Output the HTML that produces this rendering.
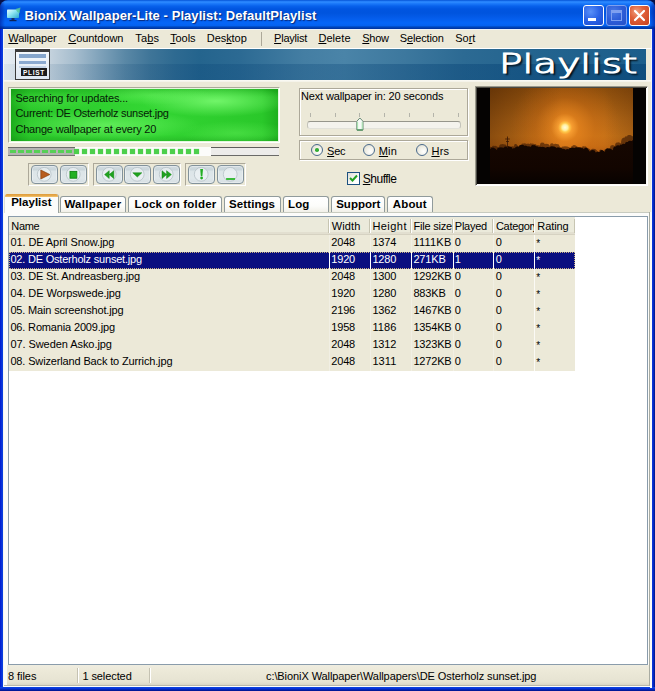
<!DOCTYPE html>
<html><head><meta charset="utf-8"><title>BioniX Wallpaper-Lite</title>
<style>
*{margin:0;padding:0;box-sizing:border-box}
html,body{width:655px;height:691px;overflow:hidden;background:#ece9d8}
body{position:relative;font-family:"Liberation Sans",sans-serif;font-size:11px;color:#000}
div,span,svg{position:absolute}
.tx{white-space:pre;line-height:1}
u{text-decoration:underline;text-decoration-thickness:1px;text-underline-offset:1px}
</style></head>
<body>
<div style="left:0;top:0;width:655px;height:12px;background:#060f48"></div>
<div style="left:0;top:0;width:655px;height:29px;background:linear-gradient(to bottom,#0450cf 0,#1a74f4 1px,#2f8cff 2px,#1c7afa 3.5px,#0862ec 6px,#0055e0 9px,#0054de 13px,#045cea 18px,#0666f8 23px,#0562f0 25.5px,#0048c0 27px,#00309a 29px);border-radius:8px 8px 0 0"></div>
<div style="left:0;top:0;width:655px;height:29px;border-radius:8px 8px 0 0;background:linear-gradient(to right,rgba(0,20,140,.55) 0,rgba(0,20,140,0) 5px,rgba(0,20,140,0) 650px,rgba(0,20,140,.55) 655px)"></div>
<div style="left:0;top:29px;width:3px;height:662px;background:linear-gradient(to right,#0019cf,#0831d9 50%,#0a44e0)"></div>
<div style="left:3px;top:29px;width:1px;height:658px;background:#f6f6f2"></div>
<div style="left:651px;top:29px;width:1px;height:658px;background:#f6f6f2"></div>
<div style="left:4px;top:29px;width:647px;height:1px;background:#eef2f8"></div>
<div style="left:652px;top:29px;width:3px;height:662px;background:linear-gradient(to right,#0c3ce0,#0628c8 45%,#001ea0 75%,#00138c)"></div>
<div style="left:0;top:687px;width:655px;height:4px;background:linear-gradient(to bottom,#0a48e0,#0831d9 40%,#001ea0 80%,#00138c)"></div>
<svg style="left:5px;top:6px" width="18" height="18" viewBox="0 0 18 18">
<defs><linearGradient id="mon" x1="0" y1="0" x2="1" y2="1"><stop offset="0" stop-color="#e8fcff"/><stop offset=".45" stop-color="#8ee6f2"/><stop offset="1" stop-color="#2aa8cc"/></linearGradient></defs>
<rect x="2" y="3.5" width="12" height="8.5" rx=".8" fill="url(#mon)"/>
<rect x="6.5" y="12" width="3" height="2" fill="#16306a"/>
<rect x="4.5" y="14" width="7" height="1.2" fill="#0c2258"/>
<path d="M10.5 3 L15.5 1.5 L14.5 7.5 L12 5.5 Z" fill="#58c8a0" opacity=".85"/>
</svg>
<div class="tx" style="left:24.60px;top:9.10px;font-size:13px;letter-spacing:0.068px;color:#fff;font-weight:bold;text-shadow:1px 1px 1px #0a2878">BioniX Wallpaper-Lite - Playlist: DefaultPlaylist</div>
<div style="left:583px;top:5px;width:21px;height:21px;border:1px solid #fff;border-radius:3px;background:radial-gradient(circle at 35% 30%,#5a90f8 0,#2a62e6 50%,#1c4cd0 100%)"><div style="left:4px;top:12px;width:8px;height:3px;background:#fff"></div></div>
<div style="left:606px;top:5px;width:21px;height:21px;border:1px solid #7ea0ee;border-radius:3px;background:radial-gradient(circle at 35% 30%,#4a7ae6 0,#2c5cd8 50%,#2450c8 100%)"><div style="left:4px;top:4px;width:11px;height:11px;border:1px solid #7e9ff0;border-top-width:3px"></div></div>
<div style="left:629px;top:5px;width:21px;height:21px;border:1px solid #fff;border-radius:3px;background:radial-gradient(circle at 35% 30%,#f0a080 0,#e0603a 40%,#c8401c 100%)"><svg width="19" height="19" style="left:0;top:0"><path d="M5 5 L14 14 M14 5 L5 14" stroke="#fff" stroke-width="2.2" stroke-linecap="round"/></svg></div>
<div class="tx" style="left:8.30px;top:32.69px;font-size:11px;letter-spacing:-0.092px;color:#000;"><u>W</u>allpaper</div>
<div class="tx" style="left:68.30px;top:32.69px;font-size:11px;letter-spacing:-0.062px;color:#000;"><u>C</u>ountdown</div>
<div class="tx" style="left:135.30px;top:32.69px;font-size:11px;letter-spacing:0.112px;color:#000;">Ta<u>b</u>s</div>
<div class="tx" style="left:170.20px;top:32.69px;font-size:11px;letter-spacing:-0.098px;color:#000;"><u>T</u>ools</div>
<div class="tx" style="left:206.80px;top:32.69px;font-size:11px;letter-spacing:-0.066px;color:#000;">Des<u>k</u>top</div>
<div class="tx" style="left:274.10px;top:32.69px;font-size:11px;letter-spacing:-0.230px;color:#000;"><u>P</u>laylist</div>
<div class="tx" style="left:318.40px;top:32.69px;font-size:11px;letter-spacing:0.067px;color:#000;"><u>D</u>elete</div>
<div class="tx" style="left:362.30px;top:32.69px;font-size:11px;letter-spacing:-0.308px;color:#000;"><u>S</u>how</div>
<div class="tx" style="left:399.80px;top:32.69px;font-size:11px;letter-spacing:-0.152px;color:#000;">S<u>e</u>lection</div>
<div class="tx" style="left:455.30px;top:32.69px;font-size:11px;letter-spacing:-0.047px;color:#000;">So<u>r</u>t</div>
<div style="left:261px;top:32px;width:1px;height:14px;background:#aca899"></div>
<div style="left:4px;top:48px;width:647px;height:1px;background:#fff"></div>
<div style="left:4px;top:49px;width:642px;height:31px;background:linear-gradient(to right,#e6edf3 0,#d3dde6 30px,#c4d2dd 46px,#a6bdce 71px,#7fa2ba 96px,#5a88a6 121px,#3f7598 146px,#2e6a91 171px,#24648d 196px,#2c6a93 236px,#447ea3 300px,#4a84a8 340px,#3d789e 400px,#2c6a93 460px,#22638e 540px,#1c5e8b 642px)">
<div style="left:0;top:15px;width:642px;height:16px;background:linear-gradient(to right,rgba(120,150,175,.1) 0,rgba(40,90,130,.2) 100px,rgba(10,70,120,.3) 200px,rgba(10,70,120,.3) 320px,rgba(10,70,120,.45) 450px,rgba(5,65,115,.55) 642px)"></div>
</div>
<div style="left:646px;top:49px;width:5px;height:31px;background:#ece9d8"></div>
<div style="left:4px;top:80px;width:647px;height:2px;background:linear-gradient(to bottom,#fbfbf7,#f3f1e6)"></div>
<div style="left:15px;top:49px;width:35px;height:31px;background:#3a3a3a">
<div style="left:1px;top:3px;width:33px;height:27px;background:linear-gradient(to bottom,#f4f8fc,#dfe8f2)"></div>
<div style="left:4px;top:5px;width:27px;height:4px;background:#86a6cc"></div>
<div style="left:4px;top:12px;width:27px;height:3px;background:#8caad0"></div>
<div style="left:4px;top:17px;width:27px;height:2px;background:#c5d5e8"></div>
<div style="left:6px;top:19px;width:26px;height:8px;background:#1c1c1c"></div>
</div>
<div class="tx" style="left:22.90px;top:69.70px;font-size:6.5px;letter-spacing:0.716px;color:#fff;font-weight:bold;">PLIST</div>
<div style="left:490px;top:49px;width:156px;height:30px;overflow:hidden"><div class="tx" id="logo" style="left:8.9px;top:1.2px;font-family:'DejaVu Sans',sans-serif;font-weight:200;font-size:27px;color:#fff;-webkit-text-stroke:1.1px #fff;transform-origin:0 0;transform:scaleX(1.442);text-shadow:1.5px 2px 1.5px #000">Playlist</div></div>
<div style="left:8px;top:87px;width:272px;height:56px;border:1px solid;border-color:#aca899 #fff #fff #aca899"></div>
<div style="left:9px;top:88px;width:270px;height:54px;border:1px solid #e4f8dc;border-left-width:2px;overflow:hidden;background:#2ccc2c">
<div style="left:0;top:0;width:270px;height:54px;background:
radial-gradient(ellipse 75px 16px at 205px 12px,rgba(130,255,120,.8),rgba(130,255,120,0) 100%),
radial-gradient(ellipse 95px 15px at 95px 36px,rgba(120,250,110,.65),rgba(120,250,110,0) 100%),
radial-gradient(ellipse 60px 10px at 140px 6px,rgba(110,245,100,.5),rgba(110,245,100,0) 100%),
radial-gradient(ellipse 55px 12px at 225px 44px,rgba(100,240,90,.45),rgba(100,240,90,0) 100%),
radial-gradient(ellipse 50px 10px at 40px 12px,rgba(90,235,80,.35),rgba(90,235,80,0) 100%),
linear-gradient(to bottom,rgba(0,90,0,.18) 0,rgba(0,90,0,0) 8px,rgba(0,90,0,0) 46px,rgba(0,90,0,.22) 54px),
linear-gradient(to right,#1cac1c 0,#2ac82a 7%,#33d633 50%,#2ac82a 93%,#1cac1c 100%)"></div>
</div>
<div class="tx" style="left:15.40px;top:92.69px;font-size:11px;letter-spacing:-0.179px;color:#062006;">Searching for updates...</div>
<div class="tx" style="left:15.40px;top:108.19px;font-size:11px;letter-spacing:-0.256px;color:#062006;">Current: DE Osterholz sunset.jpg</div>
<div class="tx" style="left:15.40px;top:123.69px;font-size:11px;letter-spacing:-0.191px;color:#062006;">Change wallpaper at every 20</div>
<div style="left:8px;top:147px;width:271px;height:9px;background:#fcfcfa"><div style="left:203px;top:0;width:68px;height:9px;background:#edecea;border-top:1px solid #5e5e5c;border-bottom:1px solid #6a6a68"></div><div style="left:0;top:0;width:67px;height:9px;background:#b4b4b2;border-top:1px solid #6c6c6a;border-bottom:1px solid #767674"></div><div style="left:2px;top:3px;width:6px;height:3px;background:#56cf56"></div><div style="left:10px;top:3px;width:6px;height:3px;background:#56cf56"></div><div style="left:18px;top:3px;width:6px;height:3px;background:#56cf56"></div><div style="left:26px;top:3px;width:6px;height:3px;background:#56cf56"></div><div style="left:34px;top:3px;width:6px;height:3px;background:#56cf56"></div><div style="left:42px;top:3px;width:6px;height:3px;background:#56cf56"></div><div style="left:50px;top:3px;width:6px;height:3px;background:#56cf56"></div><div style="left:58px;top:3px;width:6px;height:3px;background:#56cf56"></div><div style="left:66px;top:2px;width:5px;height:5px;background:#4ccf4c;box-shadow:0 0 1px #7fe07f"></div><div style="left:74px;top:2px;width:5px;height:5px;background:#4ccf4c;box-shadow:0 0 1px #7fe07f"></div><div style="left:82px;top:2px;width:5px;height:5px;background:#4ccf4c;box-shadow:0 0 1px #7fe07f"></div><div style="left:90px;top:2px;width:5px;height:5px;background:#4ccf4c;box-shadow:0 0 1px #7fe07f"></div><div style="left:98px;top:2px;width:5px;height:5px;background:#4ccf4c;box-shadow:0 0 1px #7fe07f"></div><div style="left:106px;top:2px;width:5px;height:5px;background:#4ccf4c;box-shadow:0 0 1px #7fe07f"></div><div style="left:114px;top:2px;width:5px;height:5px;background:#4ccf4c;box-shadow:0 0 1px #7fe07f"></div><div style="left:122px;top:2px;width:5px;height:5px;background:#4ccf4c;box-shadow:0 0 1px #7fe07f"></div><div style="left:130px;top:2px;width:5px;height:5px;background:#4ccf4c;box-shadow:0 0 1px #7fe07f"></div><div style="left:138px;top:2px;width:5px;height:5px;background:#4ccf4c;box-shadow:0 0 1px #7fe07f"></div><div style="left:146px;top:2px;width:5px;height:5px;background:#4ccf4c;box-shadow:0 0 1px #7fe07f"></div><div style="left:154px;top:2px;width:5px;height:5px;background:#4ccf4c;box-shadow:0 0 1px #7fe07f"></div><div style="left:162px;top:2px;width:5px;height:5px;background:#4ccf4c;box-shadow:0 0 1px #7fe07f"></div><div style="left:170px;top:2px;width:5px;height:5px;background:#4ccf4c;box-shadow:0 0 1px #7fe07f"></div><div style="left:178px;top:2px;width:5px;height:5px;background:#4ccf4c;box-shadow:0 0 1px #7fe07f"></div><div style="left:186px;top:2px;width:5px;height:5px;background:#4ccf4c;box-shadow:0 0 1px #7fe07f"></div></div>
<div style="left:28px;top:163px;width:61px;height:23px;border:1px solid;border-color:#aca899 #fff #fff #aca899"></div>
<div style="left:93px;top:163px;width:88px;height:23px;border:1px solid;border-color:#aca899 #fff #fff #aca899"></div>
<div style="left:185px;top:163px;width:61px;height:23px;border:1px solid;border-color:#aca899 #fff #fff #aca899"></div>
<div style="left:31.2px;top:165px;width:27px;height:19px;border:1px solid #82929b;border-radius:4px;background:linear-gradient(to bottom,#d2dce0 0,#c9d5da 4px,#dce5e8 5px,#dfe7ea 12px,#d6dfe3 17px);box-shadow:inset 0 0 0 1px rgba(255,255,255,.35)"><svg width="27" height="19" viewBox="0 0 27 19" style="left:-1px;top:-1px"><circle cx="13.2" cy="9.3" r="6.9" fill="rgba(236,242,244,.75)" stroke="#b0bcc2" stroke-width=".7"/><path d="M9.8 5 L9.8 14 L18.8 9.5 Z" fill="#b85c1e" stroke="#8a400e" stroke-width=".7" stroke-linejoin="round"/></svg></div>
<div style="left:60.2px;top:165px;width:27px;height:19px;border:1px solid #82929b;border-radius:4px;background:linear-gradient(to bottom,#d2dce0 0,#c9d5da 4px,#dce5e8 5px,#dfe7ea 12px,#d6dfe3 17px);box-shadow:inset 0 0 0 1px rgba(255,255,255,.35)"><svg width="27" height="19" viewBox="0 0 27 19" style="left:-1px;top:-1px"><circle cx="13.2" cy="9.3" r="6.9" fill="rgba(236,242,244,.75)" stroke="#b0bcc2" stroke-width=".7"/><rect x="10" y="6.4" width="6.8" height="6.8" fill="#22b022" stroke="#0f860f" stroke-width=".9"/></svg></div>
<div style="left:96.2px;top:165px;width:27px;height:19px;border:1px solid #82929b;border-radius:4px;background:linear-gradient(to bottom,#d2dce0 0,#c9d5da 4px,#dce5e8 5px,#dfe7ea 12px,#d6dfe3 17px);box-shadow:inset 0 0 0 1px rgba(255,255,255,.35)"><svg width="27" height="19" viewBox="0 0 27 19" style="left:-1px;top:-1px"><circle cx="13.2" cy="9.3" r="6.9" fill="rgba(236,242,244,.75)" stroke="#b0bcc2" stroke-width=".7"/><path d="M13.2 5.7 L13.2 13.5 L8.6 9.6 Z M17.8 5.7 L17.8 13.5 L13.2 9.6 Z" fill="#1fa31f" stroke="#0e800e" stroke-width=".5" stroke-linejoin="round"/></svg></div>
<div style="left:124.4px;top:165px;width:27px;height:19px;border:1px solid #82929b;border-radius:4px;background:linear-gradient(to bottom,#d2dce0 0,#c9d5da 4px,#dce5e8 5px,#dfe7ea 12px,#d6dfe3 17px);box-shadow:inset 0 0 0 1px rgba(255,255,255,.35)"><svg width="27" height="19" viewBox="0 0 27 19" style="left:-1px;top:-1px"><circle cx="13.2" cy="9.3" r="6.9" fill="rgba(236,242,244,.75)" stroke="#b0bcc2" stroke-width=".7"/><path d="M8.8 7.8 L17.8 7.8 L13.3 12 Z" fill="#1fa31f" stroke="#0e800e" stroke-width=".5" stroke-linejoin="round"/></svg></div>
<div style="left:152.5px;top:165px;width:27px;height:19px;border:1px solid #82929b;border-radius:4px;background:linear-gradient(to bottom,#d2dce0 0,#c9d5da 4px,#dce5e8 5px,#dfe7ea 12px,#d6dfe3 17px);box-shadow:inset 0 0 0 1px rgba(255,255,255,.35)"><svg width="27" height="19" viewBox="0 0 27 19" style="left:-1px;top:-1px"><circle cx="13.2" cy="9.3" r="6.9" fill="rgba(236,242,244,.75)" stroke="#b0bcc2" stroke-width=".7"/><path d="M9 5.7 L9 13.5 L13.6 9.6 Z M13.6 5.7 L13.6 13.5 L18.4 9.6 Z" fill="#1fa31f" stroke="#0e800e" stroke-width=".5" stroke-linejoin="round"/></svg></div>
<div style="left:188.1px;top:165px;width:27px;height:19px;border:1px solid #82929b;border-radius:4px;background:linear-gradient(to bottom,#d2dce0 0,#c9d5da 4px,#dce5e8 5px,#dfe7ea 12px,#d6dfe3 17px);box-shadow:inset 0 0 0 1px rgba(255,255,255,.35)"><svg width="27" height="19" viewBox="0 0 27 19" style="left:-1px;top:-1px"><circle cx="13.2" cy="9.3" r="6.9" fill="rgba(236,242,244,.75)" stroke="#b0bcc2" stroke-width=".7"/><path d="M12.2 4 L15 4 L14.4 11 L12.8 11 Z" fill="#22ae22"/><circle cx="13.6" cy="13" r="1.4" fill="#22ae22"/></svg></div>
<div style="left:216.9px;top:165px;width:27px;height:19px;border:1px solid #82929b;border-radius:4px;background:linear-gradient(to bottom,#d2dce0 0,#c9d5da 4px,#dce5e8 5px,#dfe7ea 12px,#d6dfe3 17px);box-shadow:inset 0 0 0 1px rgba(255,255,255,.35)"><svg width="27" height="19" viewBox="0 0 27 19" style="left:-1px;top:-1px"><circle cx="13.2" cy="9.3" r="6.9" fill="rgba(236,242,244,.75)" stroke="#b0bcc2" stroke-width=".7"/><rect x="9.1" y="13" width="8.9" height="2" fill="#3cbc3c"/></svg></div>
<div style="left:300px;top:89px;width:169px;height:48px;border:1px solid #fff"></div><div style="left:299px;top:88px;width:169px;height:48px;border:1px solid #aca899"></div>
<div class="tx" style="left:301.00px;top:91.49px;font-size:11px;letter-spacing:-0.153px;color:#000;">Next wallpaper in: 20 seconds</div>
<div style="left:310px;top:113px;width:1px;height:4px;background:#b4b4aa"></div>
<div style="left:335px;top:113px;width:1px;height:4px;background:#b4b4aa"></div>
<div style="left:359px;top:113px;width:1px;height:4px;background:#b4b4aa"></div>
<div style="left:384px;top:113px;width:1px;height:4px;background:#b4b4aa"></div>
<div style="left:409px;top:113px;width:1px;height:4px;background:#b4b4aa"></div>
<div style="left:433px;top:113px;width:1px;height:4px;background:#b4b4aa"></div>
<div style="left:458px;top:113px;width:1px;height:4px;background:#b4b4aa"></div>
<div style="left:307px;top:121px;width:154px;height:8px;border:1px solid;border-color:#96968c #c4c4ba #e2e2da #c4c4ba;border-radius:3px;background:#f4f3ed"></div>
<svg style="left:355.6px;top:117.4px" width="8" height="15" viewBox="0 0 8 15"><path d="M3.9 1 L7 4.3 L7 13 L0.8 13 L0.8 4.3 Z" fill="#f6fbf6" stroke="#6a8a76" stroke-width="1"/><path d="M1.6 5 L1.6 12.4 M6.2 5 L6.2 12.4" stroke="#a6e4ae" stroke-width="1"/><path d="M1 13 L6.8 13" stroke="#3f8a50" stroke-width="1.2"/></svg>
<div style="left:300px;top:141px;width:169px;height:20px;border:1px solid #fff"></div><div style="left:299px;top:140px;width:169px;height:20px;border:1px solid #aca899"></div>
<div style="left:311px;top:144px;width:12px;height:12px;border-radius:50%;border:1px solid #4a6a8c;background:radial-gradient(circle at 65% 65%,#fff 0,#f0efe6 50%,#d8d6c8 100%)"><div style="left:3.2px;top:3.2px;width:3.6px;height:3.6px;border-radius:50%;background:#35ad35"></div></div>
<div style="left:363px;top:144px;width:12px;height:12px;border-radius:50%;border:1px solid #4a6a8c;background:radial-gradient(circle at 65% 65%,#fff 0,#f0efe6 50%,#d8d6c8 100%)"></div>
<div style="left:416px;top:144px;width:12px;height:12px;border-radius:50%;border:1px solid #4a6a8c;background:radial-gradient(circle at 65% 65%,#fff 0,#f0efe6 50%,#d8d6c8 100%)"></div>
<div class="tx" style="left:327.10px;top:145.79px;font-size:11px;letter-spacing:-0.223px;color:#000;"><u>S</u>ec</div>
<div class="tx" style="left:378.80px;top:145.79px;font-size:11px;letter-spacing:0.122px;color:#000;"><u>M</u>in</div>
<div class="tx" style="left:431.40px;top:145.79px;font-size:11px;letter-spacing:0.297px;color:#000;"><u>H</u>rs</div>
<div style="left:347px;top:172px;width:13px;height:13px;border:1px solid #1c5180;background:linear-gradient(135deg,#dcdcd4,#fff 70%)"><svg width="11" height="11" style="left:0;top:0"><path d="M2 5 L4.5 7.5 L9 2.5" fill="none" stroke="#21a121" stroke-width="2"/></svg></div>
<div class="tx" style="left:362.80px;top:172.84px;font-size:12px;letter-spacing:-0.508px;color:#000;"><u>S</u>huffle</div>
<div style="left:475px;top:86px;width:173px;height:100px;border:1px solid;border-color:#9c9a8c #fff #fff #9c9a8c"></div>
<div style="left:476px;top:87px;width:171px;height:98px;background:#fbfaf4;border-top:1px solid #4a4a44;border-left:1px solid #4a4a44"></div>
<div style="left:477px;top:88px;width:169px;height:96px;background:#050302"></div>
<div style="left:490px;top:88px;width:143px;height:96px;overflow:hidden;background:#140802">
<div style="left:0;top:0;width:143px;height:70px;background:
radial-gradient(circle at 75px 39.5px,#fffbe0 0,#fff0a0 2.8px,#ffc84a 4.6px,rgba(250,160,50,.95) 7px,rgba(238,135,30,.65) 14px,rgba(225,115,20,.3) 30px,rgba(220,110,20,0) 55px),
linear-gradient(to bottom,#8a4c0c 0,#9c5810 14px,#b46816 32px,#c47218 48px,#c06a14 58px,#a85410 68px)"></div>
<div style="left:0;top:0;width:143px;height:70px;background:linear-gradient(to right,rgba(50,20,0,.4) 0,rgba(50,20,0,.12) 30%,rgba(50,20,0,0) 50%,rgba(50,20,0,0) 80%,rgba(50,20,0,.2) 100%)"></div>
<svg style="left:0;top:0" width="143" height="96" viewBox="0 0 143 96">
<defs><linearGradient id="gg" x1="0" y1="0" x2="0" y2="1"><stop offset="0" stop-color="#160701"/><stop offset=".62" stop-color="#120500"/><stop offset=".75" stop-color="#0e0400"/><stop offset="1" stop-color="#070200"/></linearGradient></defs>
<path d="M-2 59.1 Q-2 58.3 2 59.1 Q2 57.2 5 58.0 Q5 57.2 9 59.8 Q9 55.5 12 56.3 Q12 55.5 15 56.5 Q15 55.7 17 58.3 Q17 57.5 21 59.8 Q21 57.6 24 58.4 Q24 55.3 26 56.1 Q26 55.3 29 59.4 Q29 56.2 31 57.0 Q31 54.8 34 55.6 Q34 54.8 37 56.0 Q37 55.1 40 55.9 Q40 54.9 42 55.7 Q42 54.9 45 56.2 Q45 55.4 47 57.4 Q47 56.6 50 57.6 Q50 53.9 53 54.7 Q53 53.9 55 56.2 Q55 55.3 58 56.1 Q58 55.3 60 57.9 Q60 54.6 62 55.4 Q62 54.6 64 56.4 Q64 55.4 68 56.2 Q68 55.4 71 60.4 Q71 57.8 74 58.6 Q74 57.8 77 58.6 Q77 57.8 81 60.3 Q81 57.0 83 57.8 Q83 56.5 85 57.3 Q85 56.5 89 59.8 Q89 58.5 92 59.3 Q92 57.6 95 58.4 Q95 57.6 98 60.5 Q98 59.7 101 62.3 Q101 60.3 105 61.1 Q105 60.3 109 64.6 Q109 60.9 111 61.7 Q111 60.9 114 64.6 Q114 60.7 116 61.5 Q116 60.4 120 61.2 Q120 56.6 122 57.4 Q122 56.6 125 58.1 Q125 53.7 128 54.5 Q128 53.7 131 55.5 Q131 48.7 135 49.5 Q135 47.8 137 48.6 Q137 46.3 140 47.1 Q140 46.3 143 48.5 Q143 46.7 147 47.5 L148 97 L-2 97 Z" fill="#2a0f02" opacity=".55"/>
<path d="M-2 60.5 Q-2 59.7 1 60.7 Q1 58.9 3 59.7 Q3 58.9 5 60.6 Q5 59.8 7 62.2 Q7 58.8 10 59.6 Q10 58.8 14 59.8 Q14 58.0 17 58.8 Q17 57.9 21 58.7 Q21 57.9 23 61.3 Q23 59.4 25 60.2 Q25 57.8 29 58.6 Q29 56.3 32 57.1 Q32 56.3 35 57.9 Q35 57.1 38 58.6 Q38 57.8 41 58.7 Q41 56.5 44 57.3 Q44 56.5 47 58.6 Q47 57.8 49 59.2 Q49 58.2 52 59.0 Q52 58.2 56 59.8 Q56 58.5 60 59.3 Q60 57.8 64 58.6 Q64 57.8 67 59.9 Q67 58.9 70 59.7 Q70 58.9 73 61.1 Q73 60.3 76 61.7 Q76 60.5 79 61.3 Q79 59.1 81 59.9 Q81 59.1 85 60.0 Q85 58.7 88 59.5 Q88 58.7 92 60.3 Q92 59.5 94 61.3 Q94 59.2 97 60.0 Q97 59.2 100 63.8 Q100 61.4 104 62.2 Q104 61.4 106 64.8 Q106 63.3 110 64.1 Q110 61.4 112 62.2 Q112 61.4 115 63.9 Q115 59.6 119 60.4 Q119 59.6 123 62.2 Q123 57.8 126 58.6 Q126 56.6 130 57.4 Q130 55.9 132 56.7 Q132 55.1 135 55.9 Q135 53.3 138 54.1 Q138 52.3 142 53.1 Q142 51.3 146 52.1 L148 97 L-2 97 Z" fill="url(#gg)"/>
<path d="M17.5 48.5 L17.5 60 M15.2 51 L19.8 51 M16 53.5 L19 53.5" stroke="#3a1804" stroke-width=".8" fill="none"/>
</svg>
</div>
<div style="left:4px;top:212px;width:648px;height:453px;background:#fcfcfa"></div>
<div style="left:4px;top:212px;width:647px;height:1px;background:#c8cbc0"></div>
<div style="left:649px;top:212px;width:1px;height:474px;background:#a9aca2"></div>
<div style="left:650px;top:212px;width:2px;height:476px;background:#fbfbf8"></div>
<div style="left:60.0px;top:196px;width:66.0px;height:16px;border:1px solid #919b9c;border-bottom:none;border-radius:3px 3px 0 0;background:linear-gradient(to bottom,#fff 0,#fcfcfa 60%,#f1f0e8 100%)"><div style="left:0;top:0;width:64.0px;height:13.4px;overflow:hidden"><div class="tx" style="left:3.40px;top:1.97px;font-size:11.5px;letter-spacing:0.274px;color:#000;font-weight:bold;">Wallpaper</div></div></div>
<div style="left:128.0px;top:196px;width:93.5px;height:16px;border:1px solid #919b9c;border-bottom:none;border-radius:3px 3px 0 0;background:linear-gradient(to bottom,#fff 0,#fcfcfa 60%,#f1f0e8 100%)"><div style="left:0;top:0;width:91.5px;height:13.4px;overflow:hidden"><div class="tx" style="left:5.60px;top:1.97px;font-size:11.5px;letter-spacing:0.183px;color:#000;font-weight:bold;">Lock on folder</div></div></div>
<div style="left:223.6px;top:196px;width:57.4px;height:16px;border:1px solid #919b9c;border-bottom:none;border-radius:3px 3px 0 0;background:linear-gradient(to bottom,#fff 0,#fcfcfa 60%,#f1f0e8 100%)"><div style="left:0;top:0;width:55.4px;height:13.4px;overflow:hidden"><div class="tx" style="left:4.50px;top:1.97px;font-size:11.5px;letter-spacing:0.078px;color:#000;font-weight:bold;">Settings</div></div></div>
<div style="left:283.4px;top:196px;width:45.6px;height:16px;border:1px solid #919b9c;border-bottom:none;border-radius:3px 3px 0 0;background:linear-gradient(to bottom,#fff 0,#fcfcfa 60%,#f1f0e8 100%)"><div style="left:0;top:0;width:43.6px;height:13.4px;overflow:hidden"><div class="tx" style="left:3.70px;top:1.97px;font-size:11.5px;letter-spacing:0.074px;color:#000;font-weight:bold;">Log</div></div></div>
<div style="left:331.0px;top:196px;width:54.4px;height:16px;border:1px solid #919b9c;border-bottom:none;border-radius:3px 3px 0 0;background:linear-gradient(to bottom,#fff 0,#fcfcfa 60%,#f1f0e8 100%)"><div style="left:0;top:0;width:52.4px;height:13.4px;overflow:hidden"><div class="tx" style="left:4.20px;top:1.97px;font-size:11.5px;letter-spacing:0.017px;color:#000;font-weight:bold;">Support</div></div></div>
<div style="left:387.2px;top:196px;width:45.6px;height:16px;border:1px solid #919b9c;border-bottom:none;border-radius:3px 3px 0 0;background:linear-gradient(to bottom,#fff 0,#fcfcfa 60%,#f1f0e8 100%)"><div style="left:0;top:0;width:43.6px;height:13.4px;overflow:hidden"><div class="tx" style="left:4.60px;top:1.97px;font-size:11.5px;letter-spacing:0.156px;color:#000;font-weight:bold;">About</div></div></div>
<div style="left:4px;top:193.5px;width:55px;height:19.5px;background:#fcfcfa;border-left:1px solid #dcded6;border-right:1px solid #9aa2a0;border-radius:3px 3px 0 0;overflow:hidden"><div style="left:-1px;top:0;width:55px;height:3px;background:linear-gradient(to bottom,#dc9a3c,#e8ac4c 60%,#f4c878)"></div></div>
<div class="tx" style="left:11.20px;top:196.77px;font-size:11.5px;letter-spacing:0.015px;color:#000;font-weight:bold;">Playlist</div>
<div style="left:8px;top:216px;width:640px;height:449px;border:1px solid #8a9cab;background:#fff"></div>
<div style="left:9px;top:217px;width:566px;height:18px;background:#ebeadb;border-bottom:1px solid #d6d2c2;box-shadow:inset 0 -2px 0 #e2dfd0"></div>
<div style="left:328px;top:219px;width:1px;height:14px;background:#c7c5b2"></div>
<div style="left:329px;top:219px;width:1px;height:14px;background:#fff"></div>
<div style="left:369px;top:219px;width:1px;height:14px;background:#c7c5b2"></div>
<div style="left:370px;top:219px;width:1px;height:14px;background:#fff"></div>
<div style="left:410px;top:219px;width:1px;height:14px;background:#c7c5b2"></div>
<div style="left:411px;top:219px;width:1px;height:14px;background:#fff"></div>
<div style="left:452px;top:219px;width:1px;height:14px;background:#c7c5b2"></div>
<div style="left:453px;top:219px;width:1px;height:14px;background:#fff"></div>
<div style="left:492px;top:219px;width:1px;height:14px;background:#c7c5b2"></div>
<div style="left:493px;top:219px;width:1px;height:14px;background:#fff"></div>
<div style="left:533px;top:219px;width:1px;height:14px;background:#c7c5b2"></div>
<div style="left:534px;top:219px;width:1px;height:14px;background:#fff"></div>
<div style="left:574px;top:219px;width:1px;height:14px;background:#c7c5b2"></div>
<div style="left:575px;top:219px;width:1px;height:14px;background:#fff"></div>
<div class="tx" style="left:11.30px;top:220.89px;font-size:11px;letter-spacing:-0.361px;color:#000;">Name</div>
<div class="tx" style="left:331.80px;top:220.89px;font-size:11px;letter-spacing:0.095px;color:#000;">Width</div>
<div class="tx" style="left:372.40px;top:220.89px;font-size:11px;letter-spacing:0.451px;color:#000;">Height</div>
<div class="tx" style="left:413.40px;top:220.89px;font-size:11px;letter-spacing:-0.205px;color:#000;">File size</div>
<div class="tx" style="left:454.80px;top:220.89px;font-size:11px;letter-spacing:-0.240px;color:#000;">Played</div>
<div style="left:496px;top:219px;width:37.6px;height:15px;overflow:hidden"><div class="tx" style="left:0.00px;top:1.89px;font-size:11px;letter-spacing:-0.330px;color:#000;">Category</div></div>
<div class="tx" style="left:537.30px;top:220.89px;font-size:11px;letter-spacing:-0.083px;color:#000;">Rating</div>
<div style="left:9px;top:235px;width:566px;height:17px;background:#ece9d8"></div>
<div style="left:329px;top:235px;width:1px;height:17px;background:#f1efe4"></div>
<div style="left:370px;top:235px;width:1px;height:17px;background:#f1efe4"></div>
<div style="left:411px;top:235px;width:1px;height:17px;background:#f1efe4"></div>
<div style="left:453px;top:235px;width:1px;height:17px;background:#f1efe4"></div>
<div style="left:493px;top:235px;width:1px;height:17px;background:#f1efe4"></div>
<div style="left:534px;top:235px;width:1px;height:17px;background:#fbfaf5"></div>
<div class="tx" style="left:10.40px;top:237.39px;font-size:11px;letter-spacing:-0.086px;color:#000;">01. DE April Snow.jpg</div>
<div class="tx" style="left:331.20px;top:237.39px;font-size:11px;letter-spacing:-0.141px;color:#000;">2048</div>
<div class="tx" style="left:372.40px;top:237.39px;font-size:11px;letter-spacing:-0.141px;color:#000;">1374</div>
<div class="tx" style="left:413.40px;top:237.39px;font-size:11px;letter-spacing:0.236px;color:#000;">1111KB</div>
<div class="tx" style="left:454.70px;top:237.39px;font-size:11px;letter-spacing:0.155px;color:#000;">0</div>
<div class="tx" style="left:495.80px;top:237.39px;font-size:11px;letter-spacing:0.155px;color:#000;">0</div>
<div class="tx" style="left:536.20px;top:239.43px;font-size:10px;letter-spacing:0.794px;color:#000;">*</div>
<div style="left:9px;top:252px;width:566px;height:17px;background:#0a0f80"></div>
<div style="left:9px;top:252px;width:566px;height:17px;border:1px dotted #c8b080"></div>
<div style="left:329px;top:252px;width:1px;height:17px;background:#fff"></div>
<div style="left:370px;top:252px;width:1px;height:17px;background:#fff"></div>
<div style="left:411px;top:252px;width:1px;height:17px;background:#fff"></div>
<div style="left:453px;top:252px;width:1px;height:17px;background:#fff"></div>
<div style="left:493px;top:252px;width:1px;height:17px;background:#fff"></div>
<div style="left:534px;top:252px;width:1px;height:17px;background:#fff"></div>
<div class="tx" style="left:10.40px;top:254.39px;font-size:11px;letter-spacing:-0.203px;color:#fff;">02. DE Osterholz sunset.jpg</div>
<div class="tx" style="left:331.20px;top:254.39px;font-size:11px;letter-spacing:-0.141px;color:#fff;">1920</div>
<div class="tx" style="left:372.40px;top:254.39px;font-size:11px;letter-spacing:-0.141px;color:#fff;">1280</div>
<div class="tx" style="left:413.40px;top:254.39px;font-size:11px;letter-spacing:-0.158px;color:#fff;">271KB</div>
<div class="tx" style="left:454.70px;top:254.39px;font-size:11px;letter-spacing:0.155px;color:#fff;">1</div>
<div class="tx" style="left:495.80px;top:254.39px;font-size:11px;letter-spacing:0.155px;color:#fff;">0</div>
<div class="tx" style="left:536.20px;top:256.44px;font-size:10px;letter-spacing:0.794px;color:#fff;">*</div>
<div style="left:9px;top:269px;width:566px;height:17px;background:#ece9d8"></div>
<div style="left:329px;top:269px;width:1px;height:17px;background:#f1efe4"></div>
<div style="left:370px;top:269px;width:1px;height:17px;background:#f1efe4"></div>
<div style="left:411px;top:269px;width:1px;height:17px;background:#f1efe4"></div>
<div style="left:453px;top:269px;width:1px;height:17px;background:#f1efe4"></div>
<div style="left:493px;top:269px;width:1px;height:17px;background:#f1efe4"></div>
<div style="left:534px;top:269px;width:1px;height:17px;background:#fbfaf5"></div>
<div class="tx" style="left:10.40px;top:271.39px;font-size:11px;letter-spacing:-0.147px;color:#000;">03. DE St. Andreasberg.jpg</div>
<div class="tx" style="left:331.20px;top:271.39px;font-size:11px;letter-spacing:-0.141px;color:#000;">2048</div>
<div class="tx" style="left:372.40px;top:271.39px;font-size:11px;letter-spacing:-0.141px;color:#000;">1300</div>
<div class="tx" style="left:413.40px;top:271.39px;font-size:11px;letter-spacing:-0.173px;color:#000;">1292KB</div>
<div class="tx" style="left:454.70px;top:271.39px;font-size:11px;letter-spacing:0.155px;color:#000;">0</div>
<div class="tx" style="left:495.80px;top:271.39px;font-size:11px;letter-spacing:0.155px;color:#000;">0</div>
<div class="tx" style="left:536.20px;top:273.44px;font-size:10px;letter-spacing:0.794px;color:#000;">*</div>
<div style="left:9px;top:286px;width:566px;height:17px;background:#ece9d8"></div>
<div style="left:329px;top:286px;width:1px;height:17px;background:#f1efe4"></div>
<div style="left:370px;top:286px;width:1px;height:17px;background:#f1efe4"></div>
<div style="left:411px;top:286px;width:1px;height:17px;background:#f1efe4"></div>
<div style="left:453px;top:286px;width:1px;height:17px;background:#f1efe4"></div>
<div style="left:493px;top:286px;width:1px;height:17px;background:#f1efe4"></div>
<div style="left:534px;top:286px;width:1px;height:17px;background:#fbfaf5"></div>
<div class="tx" style="left:10.40px;top:288.39px;font-size:11px;letter-spacing:-0.091px;color:#000;">04. DE Worpswede.jpg</div>
<div class="tx" style="left:331.20px;top:288.39px;font-size:11px;letter-spacing:-0.141px;color:#000;">1920</div>
<div class="tx" style="left:372.40px;top:288.39px;font-size:11px;letter-spacing:-0.141px;color:#000;">1280</div>
<div class="tx" style="left:413.40px;top:288.39px;font-size:11px;letter-spacing:-0.158px;color:#000;">883KB</div>
<div class="tx" style="left:454.70px;top:288.39px;font-size:11px;letter-spacing:0.155px;color:#000;">0</div>
<div class="tx" style="left:495.80px;top:288.39px;font-size:11px;letter-spacing:0.155px;color:#000;">0</div>
<div class="tx" style="left:536.20px;top:290.44px;font-size:10px;letter-spacing:0.794px;color:#000;">*</div>
<div style="left:9px;top:303px;width:566px;height:17px;background:#ece9d8"></div>
<div style="left:329px;top:303px;width:1px;height:17px;background:#f1efe4"></div>
<div style="left:370px;top:303px;width:1px;height:17px;background:#f1efe4"></div>
<div style="left:411px;top:303px;width:1px;height:17px;background:#f1efe4"></div>
<div style="left:453px;top:303px;width:1px;height:17px;background:#f1efe4"></div>
<div style="left:493px;top:303px;width:1px;height:17px;background:#f1efe4"></div>
<div style="left:534px;top:303px;width:1px;height:17px;background:#fbfaf5"></div>
<div class="tx" style="left:10.40px;top:305.39px;font-size:11px;letter-spacing:-0.165px;color:#000;">05. Main screenshot.jpg</div>
<div class="tx" style="left:331.20px;top:305.39px;font-size:11px;letter-spacing:-0.141px;color:#000;">2196</div>
<div class="tx" style="left:372.40px;top:305.39px;font-size:11px;letter-spacing:-0.141px;color:#000;">1362</div>
<div class="tx" style="left:413.40px;top:305.39px;font-size:11px;letter-spacing:-0.173px;color:#000;">1467KB</div>
<div class="tx" style="left:454.70px;top:305.39px;font-size:11px;letter-spacing:0.155px;color:#000;">0</div>
<div class="tx" style="left:495.80px;top:305.39px;font-size:11px;letter-spacing:0.155px;color:#000;">0</div>
<div class="tx" style="left:536.20px;top:307.44px;font-size:10px;letter-spacing:0.794px;color:#000;">*</div>
<div style="left:9px;top:320px;width:566px;height:17px;background:#ece9d8"></div>
<div style="left:329px;top:320px;width:1px;height:17px;background:#f1efe4"></div>
<div style="left:370px;top:320px;width:1px;height:17px;background:#f1efe4"></div>
<div style="left:411px;top:320px;width:1px;height:17px;background:#f1efe4"></div>
<div style="left:453px;top:320px;width:1px;height:17px;background:#f1efe4"></div>
<div style="left:493px;top:320px;width:1px;height:17px;background:#f1efe4"></div>
<div style="left:534px;top:320px;width:1px;height:17px;background:#fbfaf5"></div>
<div class="tx" style="left:10.40px;top:322.39px;font-size:11px;letter-spacing:-0.157px;color:#000;">06. Romania 2009.jpg</div>
<div class="tx" style="left:331.20px;top:322.39px;font-size:11px;letter-spacing:-0.141px;color:#000;">1958</div>
<div class="tx" style="left:372.40px;top:322.39px;font-size:11px;letter-spacing:0.066px;color:#000;">1186</div>
<div class="tx" style="left:413.40px;top:322.39px;font-size:11px;letter-spacing:-0.173px;color:#000;">1354KB</div>
<div class="tx" style="left:454.70px;top:322.39px;font-size:11px;letter-spacing:0.155px;color:#000;">0</div>
<div class="tx" style="left:495.80px;top:322.39px;font-size:11px;letter-spacing:0.155px;color:#000;">0</div>
<div class="tx" style="left:536.20px;top:324.44px;font-size:10px;letter-spacing:0.794px;color:#000;">*</div>
<div style="left:9px;top:337px;width:566px;height:17px;background:#ece9d8"></div>
<div style="left:329px;top:337px;width:1px;height:17px;background:#f1efe4"></div>
<div style="left:370px;top:337px;width:1px;height:17px;background:#f1efe4"></div>
<div style="left:411px;top:337px;width:1px;height:17px;background:#f1efe4"></div>
<div style="left:453px;top:337px;width:1px;height:17px;background:#f1efe4"></div>
<div style="left:493px;top:337px;width:1px;height:17px;background:#f1efe4"></div>
<div style="left:534px;top:337px;width:1px;height:17px;background:#fbfaf5"></div>
<div class="tx" style="left:10.40px;top:339.39px;font-size:11px;letter-spacing:-0.066px;color:#000;">07. Sweden Asko.jpg</div>
<div class="tx" style="left:331.20px;top:339.39px;font-size:11px;letter-spacing:-0.141px;color:#000;">2048</div>
<div class="tx" style="left:372.40px;top:339.39px;font-size:11px;letter-spacing:-0.141px;color:#000;">1312</div>
<div class="tx" style="left:413.40px;top:339.39px;font-size:11px;letter-spacing:-0.173px;color:#000;">1323KB</div>
<div class="tx" style="left:454.70px;top:339.39px;font-size:11px;letter-spacing:0.155px;color:#000;">0</div>
<div class="tx" style="left:495.80px;top:339.39px;font-size:11px;letter-spacing:0.155px;color:#000;">0</div>
<div class="tx" style="left:536.20px;top:341.44px;font-size:10px;letter-spacing:0.794px;color:#000;">*</div>
<div style="left:9px;top:354px;width:566px;height:17px;background:#ece9d8"></div>
<div style="left:329px;top:354px;width:1px;height:17px;background:#f1efe4"></div>
<div style="left:370px;top:354px;width:1px;height:17px;background:#f1efe4"></div>
<div style="left:411px;top:354px;width:1px;height:17px;background:#f1efe4"></div>
<div style="left:453px;top:354px;width:1px;height:17px;background:#f1efe4"></div>
<div style="left:493px;top:354px;width:1px;height:17px;background:#f1efe4"></div>
<div style="left:534px;top:354px;width:1px;height:17px;background:#fbfaf5"></div>
<div class="tx" style="left:10.40px;top:356.39px;font-size:11px;letter-spacing:-0.145px;color:#000;">08. Swizerland Back to Zurrich.jpg</div>
<div class="tx" style="left:331.20px;top:356.39px;font-size:11px;letter-spacing:-0.141px;color:#000;">2048</div>
<div class="tx" style="left:372.40px;top:356.39px;font-size:11px;letter-spacing:0.066px;color:#000;">1311</div>
<div class="tx" style="left:413.40px;top:356.39px;font-size:11px;letter-spacing:-0.173px;color:#000;">1272KB</div>
<div class="tx" style="left:454.70px;top:356.39px;font-size:11px;letter-spacing:0.155px;color:#000;">0</div>
<div class="tx" style="left:495.80px;top:356.39px;font-size:11px;letter-spacing:0.155px;color:#000;">0</div>
<div class="tx" style="left:536.20px;top:358.44px;font-size:10px;letter-spacing:0.794px;color:#000;">*</div>
<div style="left:4px;top:665px;width:648px;height:22px;background:#fbfbf8"></div>
<div style="left:7px;top:665px;width:642px;height:20px;background:linear-gradient(to bottom,#efede0 0,#ece9d8 30%,#e6e3d2 85%,#d9d6c6 100%)"></div>
<div style="left:4px;top:685px;width:646px;height:1px;background:#b8b8ac"></div><div style="left:4px;top:686px;width:648px;height:1px;background:#fdfdfb"></div>
<div style="left:649px;top:665px;width:1px;height:21px;background:#a9aca2"></div>
<div style="left:77px;top:668px;width:1px;height:15px;background:#c5c2b2"></div><div style="left:78px;top:668px;width:1px;height:15px;background:#fff"></div>
<div style="left:149px;top:668px;width:1px;height:15px;background:#c5c2b2"></div><div style="left:150px;top:668px;width:1px;height:15px;background:#fff"></div>
<div class="tx" style="left:7.90px;top:671.29px;font-size:11px;letter-spacing:-0.036px;color:#000;">8 files</div>
<div class="tx" style="left:82.40px;top:671.29px;font-size:11px;letter-spacing:-0.086px;color:#000;">1 selected</div>
<div class="tx" style="left:266.00px;top:671.29px;font-size:11px;letter-spacing:-0.084px;color:#000;">c:\BioniX Wallpaper\Wallpapers\DE Osterholz sunset.jpg</div>
</body></html>
